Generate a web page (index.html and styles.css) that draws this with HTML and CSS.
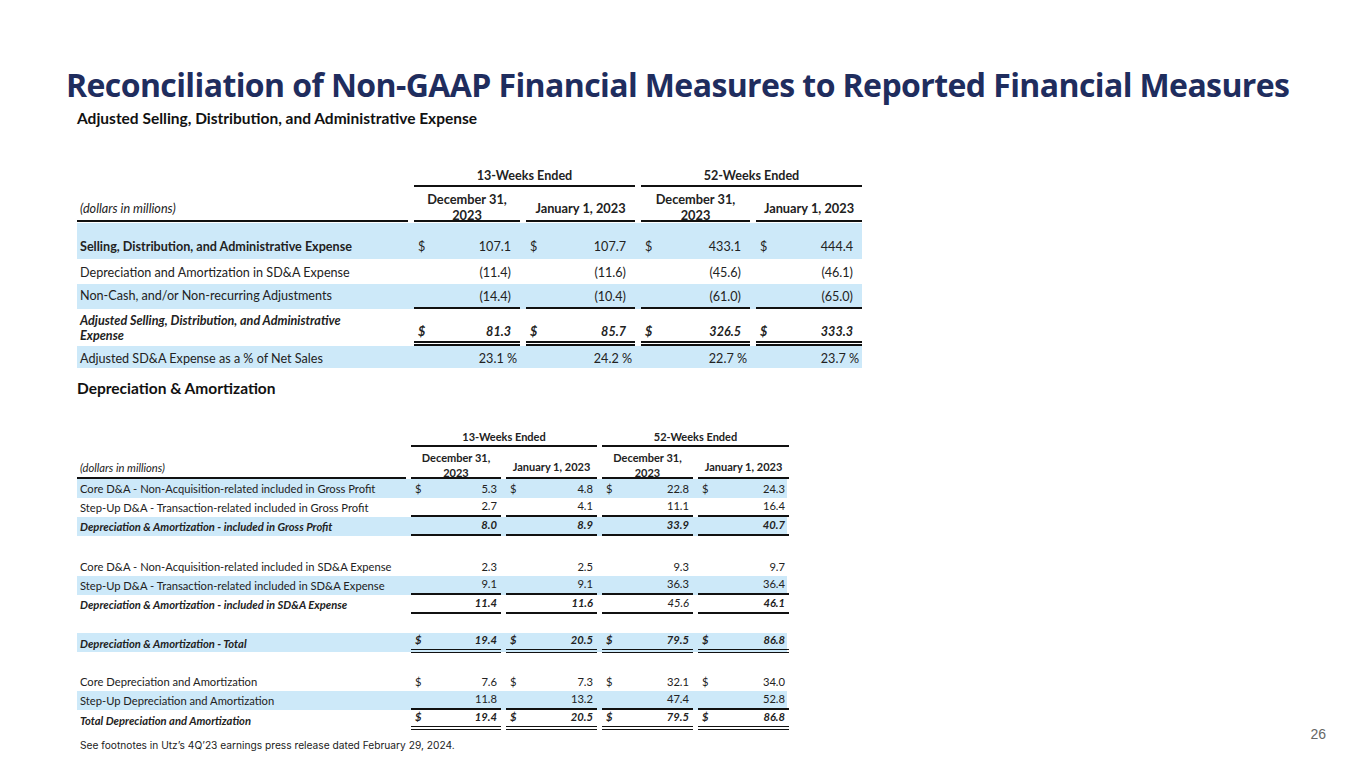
FILE: index.html
```html
<!DOCTYPE html>
<html lang="en">
<head>
<meta charset="utf-8">
<title>Reconciliation of Non-GAAP Financial Measures</title>
<link rel="stylesheet" href="styles.css">
</head>
<body>
<main class="slide">
  <h1 class="title">Reconciliation of Non-GAAP Financial Measures to Reported Financial Measures</h1>

  <section class="block block-sdna">
    <h2 class="sec-title">Adjusted Selling, Distribution, and Administrative Expense</h2>
    <div class="tbl t1">
      <div class="row grp-row">
        <div></div>
        <div class="grp">13-Weeks Ended</div>
        <div class="grp">52-Weeks Ended</div>
      </div>
      <div class="row head-row">
        <div class="lbl it">(dollars in millions)</div>
        <div class="ch"><span class="two">December 31,<br>2023</span></div>
        <div class="ch">January 1, 2023</div>
        <div class="ch"><span class="two">December 31,<br>2023</span></div>
        <div class="ch">January 1, 2023</div>
      </div>
      <div class="row blue r-tall">
        <div class="lbl b">Selling, Distribution, and Administrative Expense</div>
        <div class="c"><span>$</span><span>107.1</span></div>
        <div class="c"><span>$</span><span>107.7</span></div>
        <div class="c"><span>$</span><span>433.1</span></div>
        <div class="c"><span>$</span><span>444.4</span></div>
      </div>
      <div class="row r-mid">
        <div class="lbl">Depreciation and Amortization in SD&amp;A Expense</div>
        <div class="c"><span></span><span>(11.4)</span></div>
        <div class="c"><span></span><span>(11.6)</span></div>
        <div class="c"><span></span><span>(45.6)</span></div>
        <div class="c"><span></span><span>(46.1)</span></div>
      </div>
      <div class="row blue r-mid r-nc">
        <div class="lbl">Non-Cash, and/or Non-recurring Adjustments</div>
        <div class="c ul"><span></span><span>(14.4)</span></div>
        <div class="c ul"><span></span><span>(10.4)</span></div>
        <div class="c ul"><span></span><span>(61.0)</span></div>
        <div class="c ul"><span></span><span>(65.0)</span></div>
      </div>
      <div class="row r-adj bi">
        <div class="lbl lbl-2">Adjusted Selling, Distribution, and Administrative<br>Expense</div>
        <div class="c dul"><span>$</span><span>81.3</span></div>
        <div class="c dul"><span>$</span><span>85.7</span></div>
        <div class="c dul"><span>$</span><span>326.5</span></div>
        <div class="c dul"><span>$</span><span>333.3</span></div>
      </div>
      <div class="row blue r-pct">
        <div class="lbl">Adjusted SD&amp;A Expense as a % of Net Sales</div>
        <div class="c pct"><span></span><span>23.1 %</span></div>
        <div class="c pct"><span></span><span>24.2 %</span></div>
        <div class="c pct"><span></span><span>22.7 %</span></div>
        <div class="c pct"><span></span><span>23.7 %</span></div>
      </div>
    </div>
  </section>

  <section class="block block-da">
    <h2 class="sec-title">Depreciation &amp; Amortization</h2>
    <div class="tbl t2">
      <div class="row grp-row">
        <div></div>
        <div class="grp">13-Weeks Ended</div>
        <div class="grp">52-Weeks Ended</div>
      </div>
      <div class="row head-row">
        <div class="lbl it">(dollars in millions)</div>
        <div class="ch"><span class="two">December 31,<br>2023</span></div>
        <div class="ch">January 1, 2023</div>
        <div class="ch"><span class="two">December 31,<br>2023</span></div>
        <div class="ch">January 1, 2023</div>
      </div>

      <div class="row blue">
        <div class="lbl">Core D&amp;A - Non-Acquisition-related included in Gross Profit</div>
        <div class="c"><span>$</span><span>5.3</span></div>
        <div class="c"><span>$</span><span>4.8</span></div>
        <div class="c"><span>$</span><span>22.8</span></div>
        <div class="c"><span>$</span><span>24.3</span></div>
      </div>
      <div class="row">
        <div class="lbl">Step-Up D&amp;A - Transaction-related included in Gross Profit</div>
        <div class="c ul"><span></span><span>2.7</span></div>
        <div class="c ul"><span></span><span>4.1</span></div>
        <div class="c ul"><span></span><span>11.1</span></div>
        <div class="c ul"><span></span><span>16.4</span></div>
      </div>
      <div class="row blue bi">
        <div class="lbl">Depreciation &amp; Amortization - included in Gross Profit</div>
        <div class="c ul"><span></span><span>8.0</span></div>
        <div class="c ul"><span></span><span>8.9</span></div>
        <div class="c ul"><span></span><span>33.9</span></div>
        <div class="c ul"><span></span><span>40.7</span></div>
      </div>
      <div class="row spacer"></div>

      <div class="row">
        <div class="lbl">Core D&amp;A - Non-Acquisition-related included in SD&amp;A Expense</div>
        <div class="c"><span></span><span>2.3</span></div>
        <div class="c"><span></span><span>2.5</span></div>
        <div class="c"><span></span><span>9.3</span></div>
        <div class="c"><span></span><span>9.7</span></div>
      </div>
      <div class="row blue">
        <div class="lbl">Step-Up D&amp;A - Transaction-related included in SD&amp;A Expense</div>
        <div class="c ul"><span></span><span>9.1</span></div>
        <div class="c ul"><span></span><span>9.1</span></div>
        <div class="c ul"><span></span><span>36.3</span></div>
        <div class="c ul"><span></span><span>36.4</span></div>
      </div>
      <div class="row bi">
        <div class="lbl">Depreciation &amp; Amortization - included in SD&amp;A Expense</div>
        <div class="c ul"><span></span><span>11.4</span></div>
        <div class="c ul"><span></span><span>11.6</span></div>
        <div class="c ul"><span></span><span class="nb">45.6</span></div>
        <div class="c ul"><span></span><span>46.1</span></div>
      </div>
      <div class="row spacer sp-b"></div>

      <div class="row blue bi">
        <div class="lbl">Depreciation &amp; Amortization - Total</div>
        <div class="c dul"><span>$</span><span>19.4</span></div>
        <div class="c dul"><span>$</span><span>20.5</span></div>
        <div class="c dul"><span>$</span><span>79.5</span></div>
        <div class="c dul"><span>$</span><span>86.8</span></div>
      </div>
      <div class="row spacer sp-c"></div>

      <div class="row">
        <div class="lbl">Core Depreciation and Amortization</div>
        <div class="c"><span>$</span><span>7.6</span></div>
        <div class="c"><span>$</span><span>7.3</span></div>
        <div class="c"><span>$</span><span>32.1</span></div>
        <div class="c"><span>$</span><span>34.0</span></div>
      </div>
      <div class="row blue">
        <div class="lbl">Step-Up Depreciation and Amortization</div>
        <div class="c ul"><span></span><span>11.8</span></div>
        <div class="c ul"><span></span><span>13.2</span></div>
        <div class="c ul"><span></span><span>47.4</span></div>
        <div class="c ul"><span></span><span>52.8</span></div>
      </div>
      <div class="row bi">
        <div class="lbl">Total Depreciation and Amortization</div>
        <div class="c dul"><span>$</span><span>19.4</span></div>
        <div class="c dul"><span>$</span><span>20.5</span></div>
        <div class="c dul"><span>$</span><span>79.5</span></div>
        <div class="c dul"><span>$</span><span>86.8</span></div>
      </div>
    </div>
  </section>

  <footer class="foot">
    <p class="note">See footnotes in Utz’s 4Q’23 earnings press release dated February 29, 2024.</p>
    <span class="pgnum">26</span>
  </footer>
</main>
</body>
</html>
```

FILE: styles.css
```css
* { box-sizing: border-box; }

html, body {
  margin: 0;
  padding: 0;
  background: #ffffff;
}

.slide {
  width: 1365px;
  height: 768px;
  padding: 67px 0 0 0;
  overflow: hidden;
  color: #1c1c1c;
}

.title {
  margin: 0 0 0 66px;
  font-family: "Open Sans", sans-serif;
  font-weight: 700;
  font-size: 32px;
  line-height: 36px;
  letter-spacing: -0.6px;
  color: #1f2d5e;
  white-space: nowrap;
}

.block { margin-left: 77px; }

.sec-title {
  margin: 0;
  font-family: "Lato", sans-serif;
  font-weight: 700;
  font-size: 15.5px;
  line-height: 18px;
  color: #111;
}

.block-sdna .sec-title { margin-top: 6px; }
.block-da .sec-title { margin-top: 11px; }

.tbl {
  font-family: "Lato", sans-serif;
  color: #222;
}

.row {
  display: grid;
  align-items: end;
}

.t1 { margin-top: 41px; font-size: 12.6px; width: 785px; }
.t1 .row { grid-template-columns: 331px 106px 109px 109px 106px; column-gap: 6px; }

.t2 { margin-top: 33px; font-size: 11.2px; width: 710px; }
.t2 .row { grid-template-columns: 329px 90px 91px 91px 91px; column-gap: 5px; height: 19px; }

.grp-row .grp {
  grid-column: span 2;
  text-align: center;
  font-weight: 700;
  border-bottom: 2px solid #111;
}
.t1 .grp-row .grp { font-size: 12.6px; line-height: 16px; padding-bottom: 1px; }
.t2 .grp-row { height: auto; }
.t2 .grp-row .grp { font-size: 11px; line-height: 14px; padding-bottom: 1px; }

.head-row > div {
  border-bottom: 2px solid #111;
  height: 100%;
  display: flex;
  align-items: flex-end;
}
.head-row .ch {
  justify-content: center;
  text-align: center;
  font-weight: 700;
}
.head-row .two { display: block; }
.head-row .lbl { padding-left: 3px; }
.t1 .head-row { height: 35px; }
.t1 .head-row > div { padding-bottom: 2px; }
.t1 .head-row .ch { font-size: 12.8px; line-height: 16px; }
.t1 .head-row .ch:nth-child(2), .t1 .head-row .ch:nth-child(4) { padding-bottom: 0; }
.t1 .head-row .two { margin-bottom: -3px; }
.t2 .head-row { height: 31px; margin-top: 1px; }
.t2 .head-row > div { padding-bottom: 5px; }
.t2 .head-row .ch { font-size: 11px; line-height: 14px; }
.t2 .head-row .ch:nth-child(2), .t2 .head-row .ch:nth-child(4) { padding-bottom: 0; line-height: 15px; }
.t2 .head-row .two { margin-bottom: -3px; }

.it { font-style: italic; }
.b { font-weight: 700; }
.bi { font-weight: 700; font-style: italic; }
.bi .nb { font-weight: 400; }

.blue { background: #cde9f9; }

.lbl {
  padding-left: 3px;
  white-space: nowrap;
}

.c {
  display: flex;
  justify-content: space-between;
  align-items: flex-end;
  height: 100%;
  padding: 0 4px 0 4px;
}

.t1 .c { padding-right: 9px; }
.t1 .c.pct { padding-right: 3px; }

.t1 .row > div { padding-bottom: 4px; }
.t1 .r-tall { height: 36px; margin-top: 1px; }
.t1 .r-tall > div { padding-bottom: 5px; }
.t1 .r-mid { height: 25px; }
.t1 .r-nc > .lbl { padding-bottom: 6px; }
.t1 .r-nc > .c { padding-bottom: 3px; }
.t1 .r-adj { height: 37px; }
.t1 .r-adj > .c { padding-bottom: 2px; }
.t1 .r-pct { height: 22px; }
.t1 .r-pct > div { padding-bottom: 2px; }
.t1 .lbl-2 { line-height: 15px; padding-bottom: 0 !important; height: 100%; overflow: hidden; padding-top: 4px; }

.t2 .row > div { padding-bottom: 3px; line-height: 13px; }
.t2 .spacer { height: 21px; }
.t2 .spacer.sp-b { height: 19px; }
.t2 .spacer.sp-c { height: 20px; }

.ul { border-bottom: 2px solid #111; }
.dul { border-bottom: 4px double #111; }
.t1 .dul { border-bottom-width: 5px; }

.foot {
  display: flex;
  justify-content: space-between;
  align-items: flex-start;
  margin: 4px 0 0 80px;
  width: 1246px;
}

.note {
  margin: 6px 0 0 0;
  font-family: "Inter", sans-serif;
  font-size: 10.2px;
  line-height: 12px;
  color: #222;
}

.pgnum {
  margin-top: -7px;
  font-family: "Liberation Sans", sans-serif;
  font-size: 14px;
  color: #666;
}
```
